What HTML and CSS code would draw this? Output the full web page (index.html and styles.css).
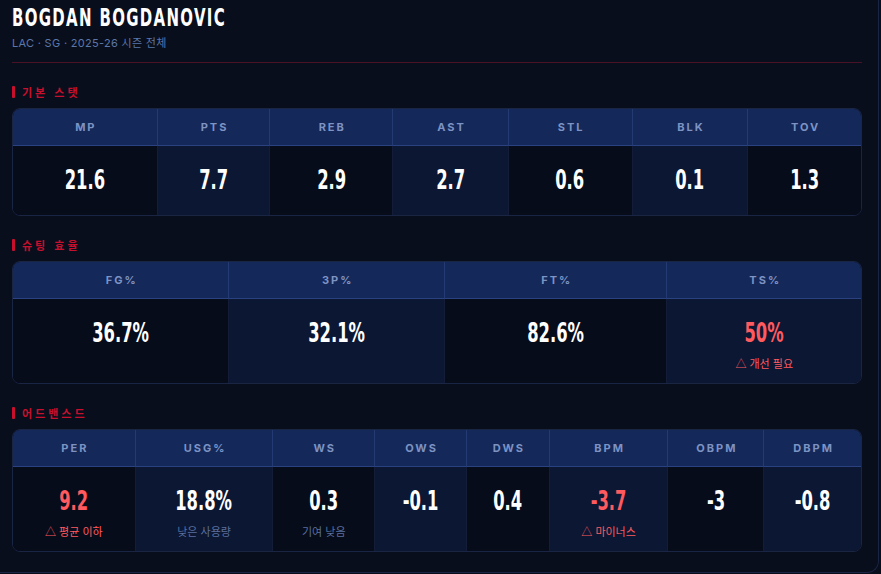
FILE: index.html
```html
<!DOCTYPE html>
<html lang="ko">
<head>
<meta charset="utf-8">
<title>Bogdan Bogdanovic</title>
<link rel="stylesheet" href="styles.css">
</head>
<body>
<div class="panel">
  <header class="hero">
    <h1 class="name"><span class="squeeze">BOGDAN BOGDANOVIC</span></h1>
    <div class="meta">LAC · SG · 2025-26 시즌 전체</div>
  </header>

  <section class="section">
    <h2 class="sec-title">기본 스탯</h2>
    <div class="stat-table t-basic">
      <div class="col"><div class="head">MP</div><div class="body"><div class="val">21.6</div></div></div>
      <div class="col"><div class="head">PTS</div><div class="body"><div class="val">7.7</div></div></div>
      <div class="col"><div class="head">REB</div><div class="body"><div class="val">2.9</div></div></div>
      <div class="col"><div class="head">AST</div><div class="body"><div class="val">2.7</div></div></div>
      <div class="col"><div class="head">STL</div><div class="body"><div class="val">0.6</div></div></div>
      <div class="col"><div class="head">BLK</div><div class="body"><div class="val">0.1</div></div></div>
      <div class="col"><div class="head">TOV</div><div class="body"><div class="val">1.3</div></div></div>
    </div>
  </section>

  <section class="section">
    <h2 class="sec-title">슈팅 효율</h2>
    <div class="stat-table t-shoot">
      <div class="col"><div class="head">FG%</div><div class="body"><div class="val">36.7%</div></div></div>
      <div class="col"><div class="head">3P%</div><div class="body"><div class="val">32.1%</div></div></div>
      <div class="col"><div class="head">FT%</div><div class="body"><div class="val">82.6%</div></div></div>
      <div class="col"><div class="head">TS%</div><div class="body"><div class="val bad">50%</div><div class="note warn">△ 개선 필요</div></div></div>
    </div>
  </section>

  <section class="section">
    <h2 class="sec-title">어드밴스드</h2>
    <div class="stat-table t-adv">
      <div class="col"><div class="head">PER</div><div class="body"><div class="val bad">9.2</div><div class="note warn">△ 평균 이하</div></div></div>
      <div class="col"><div class="head">USG%</div><div class="body"><div class="val">18.8%</div><div class="note">낮은 사용량</div></div></div>
      <div class="col"><div class="head">WS</div><div class="body"><div class="val">0.3</div><div class="note">기여 낮음</div></div></div>
      <div class="col"><div class="head">OWS</div><div class="body"><div class="val">-0.1</div></div></div>
      <div class="col"><div class="head">DWS</div><div class="body"><div class="val">0.4</div></div></div>
      <div class="col"><div class="head">BPM</div><div class="body"><div class="val bad">-3.7</div><div class="note warn">△ 마이너스</div></div></div>
      <div class="col"><div class="head">OBPM</div><div class="body"><div class="val">-3</div></div></div>
      <div class="col"><div class="head">DBPM</div><div class="body"><div class="val">-0.8</div></div></div>
    </div>
  </section>
</div>
</body>
</html>
```

FILE: styles.css
```css
* { box-sizing: border-box; }
html, body {
  margin: 0;
  padding: 0;
  background: #090e1c;
}
body {
  font-family: Inter, "Noto Sans CJK KR", sans-serif;
  color: #ffffff;
  overflow: hidden;
}
.panel {
  width: 879px;
  height: 573px;
  padding: 4px 16px 0 12px;
  border-right: 1px solid #1a2443;
  border-bottom: 1px solid #1a2443;
  border-bottom-right-radius: 12px;
  background: #090e1c;
}
.hero {
  padding-bottom: 11px;
  border-bottom: 1px solid #4a1227;
  margin-bottom: 22px;
}
.name {
  margin: 0;
  font-family: "DejaVu Sans Condensed", sans-serif;
  font-weight: 700;
  font-size: 25px;
  line-height: 28px;
  letter-spacing: 2px;
  color: #ffffff;
  white-space: nowrap;
}
.squeeze {
  display: inline-block;
  transform: scaleX(0.665);
  transform-origin: left center;
}
.meta {
  margin-top: 3px;
  font-size: 11px;
  line-height: 16px;
  color: #5b77aa;
  letter-spacing: 0.3px;
  font-family: Inter, "Noto Sans CJK KR", sans-serif;
}
.section { margin-bottom: 22px; }
.sec-title {
  margin: 0 0 9px 0;
  display: flex;
  align-items: center;
  gap: 7px;
  font-family: "Noto Sans CJK KR", sans-serif;
  font-size: 11px;
  line-height: 14px;
  font-weight: 700;
  letter-spacing: 3px;
  color: #c8102e;
}
.sec-title::before {
  content: "";
  width: 3px;
  height: 12px;
  background: #c8102e;
  border-radius: 1px;
}
.stat-table {
  display: grid;
  border: 1px solid #1a2443;
  border-radius: 8px;
  overflow: hidden;
  background: #070c1a;
}
.t-basic { grid-template-columns: 145fr 113fr 123fr 116fr 124fr 116fr 113fr; }
.t-shoot { grid-template-columns: 217fr 216fr 223fr 194fr; }
.t-adv { grid-template-columns: 123fr 138fr 102fr 92fr 83fr 119fr 96fr 97fr; }
.col {
  display: flex;
  flex-direction: column;
  min-width: 0;
}
.head {
  height: 37px;
  display: flex;
  align-items: center;
  justify-content: center;
  background: #14285a;
  border-bottom: 1px solid #2b4280;
  border-right: 1px solid #233a72;
  font-family: Inter, sans-serif;
  font-weight: 700;
  font-size: 11px;
  letter-spacing: 2px;
  color: #7d93c3;
  padding-left: 2px;
}
.col:last-child .head { border-right: none; }
.body {
  flex: 1;
  display: flex;
  flex-direction: column;
  align-items: center;
  padding: 12px 4px;
  background: #070c1a;
  border-right: 1px solid #141d38;
}
.col:nth-child(even) .body { background: #0b1733; }
.col:last-child .body { border-right: none; }
.val {
  font-family: "DejaVu Sans Condensed", sans-serif;
  font-weight: 700;
  font-size: 26px;
  line-height: 45px;
  color: #ffffff;
  transform: scaleX(0.7);
}
.val.bad { color: #ff5a5f; }
.note {
  font-family: "Noto Sans CJK KR", sans-serif;
  font-size: 11px;
  line-height: 15px;
  color: #5a6f9f;
}
.note.warn { color: #ff5a5f; }
```
